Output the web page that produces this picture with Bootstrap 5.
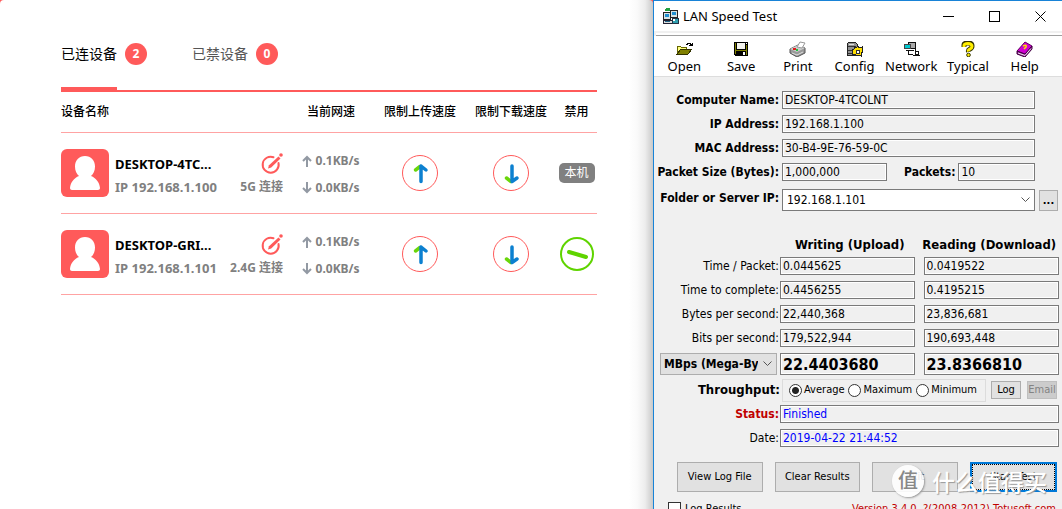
<!DOCTYPE html>
<html lang="zh-CN">
<head>
<meta charset="utf-8">
<meta name="viewport" content="width=device-width, initial-scale=1">
<title>LAN Speed Test</title>
<link href="https://cdn.jsdelivr.net/npm/bootstrap@5.3.0/dist/css/bootstrap.min.css" rel="stylesheet">
<style>
:root{--brand:#ff5a5a;--ui:"Noto Sans","Noto Sans CJK SC",sans-serif;--form:"DejaVu Sans Condensed","Noto Sans CJK SC",sans-serif}
body{font-family:var(--ui);font-size:12px;line-height:16px;color:#000;background:var(--brand)}
.screen{display:grid;grid-template-columns:653fr 409fr;height:100vh;overflow:hidden}
/* router page */
.router{padding:0 56px 0 61px;border-radius:4px;background:linear-gradient(to left,#c9c9c9 0,#ededed 8px,#fafafa 16px,#fff 24px)}
.tabs{height:92px;padding-top:34px;gap:45px;border-bottom:2px solid var(--brand)}
.tab{height:58px;padding:0;border:0;background:none;display:flex;align-items:flex-start;font-size:14px;color:#555}
.tab .caption-text{height:58px;line-height:40px;border-bottom:5px solid transparent}
.tab.active{color:#000}
.tab.active .caption-text{border-color:var(--brand)}
.count{width:22px;height:22px;margin:9px 0 0 8px;border-radius:50%;background:var(--brand);color:#fff;font-weight:700;font-size:12px;line-height:22px}
.devices{table-layout:fixed;width:100%;border-collapse:separate;border-spacing:0}
.devices th,.devices td{padding:0;border-bottom:1px solid #ffa3a3;text-align:center;vertical-align:middle}
.devices th{height:41px;font-weight:500}
.devices td{height:81px}
.devices th:first-child{text-align:left}
.w-speed{width:86px}.w-up{width:92px}.w-down{width:90px}.w-ban{width:41px}
.device{display:flex;align-items:center;padding-right:5px}
.device-info{flex:1;padding:2px 0 0 6px;text-align:left;white-space:nowrap}
.avatar{width:48px;height:48px;flex:none}
.dev-name{font-weight:700;font-size:13px}
.dev-ip{font-size:13px}
.dim{color:#808080;font-weight:700}
.speeds{display:inline-flex;flex-direction:column;gap:11px;padding-top:2px}
.plain-btn{padding:0;border:0;background:none;line-height:0}
.round-btn{display:block;width:36px;height:36px;margin:0 auto;padding:0;border:1px solid var(--brand);border-radius:50%;background:#fff;line-height:0}
.ban-btn{display:block;margin:0 auto}
.self-tag{display:inline-block;width:36px;height:20px;border-radius:5px;background:#808080;color:#fff;line-height:20px}
.arrow{width:10px;height:12px}
/* desktop window */
.win{position:relative;min-width:0;background:#f0f0f0;border-left:1px solid #1883d7;border-top:1px solid #1883d7;font-family:var(--form)}
.titlebar{height:30px;padding:0 16px 0 8px;background:#fff;font-family:var(--ui);font-size:13px}
.topline{height:5px;margin-left:2px;background:#fff;border-top:2px solid #f0f0f0;border-bottom:1px solid #a0a0a0}
.toolbar{height:41px;padding:0 9px 0 2px;background:#fff;border-bottom:1px solid #ddd;font-family:var(--ui);font-size:13px}
.tool{width:57px;padding:3px 0 0;border:0;background:none;color:#000;text-align:center;line-height:18px}
.tool svg{display:block;margin:0 auto}
.frow{display:grid;grid-template-columns:128px 1fr 27px;margin-bottom:6px}
.frow label,.rrow label{text-align:right;padding-right:3px;line-height:18px;white-space:nowrap}
.rrow label{padding-right:1px;font-size:12px}
.fld{display:block;width:100%;min-width:0;height:18px;padding:0 2px;border:1px solid #7a7a7a;border-radius:0;background:#f0f0f0;box-shadow:inset 0 0 0 1px #fff;font:12px/16px var(--form);color:#000}
.fld.tall{height:22px;font-size:16px;font-weight:700}
.fld.blue-text{color:#00f}
.rrow{display:grid;grid-template-columns:126px 1fr 1fr;padding-right:3px;margin-bottom:6px}
.rrow .fld:nth-child(2){width:calc(100% - 5px)}
.rrow .fld:nth-child(3){margin-left:4px;width:calc(100% - 4px)}
.heads{font-size:13px;font-weight:700;text-align:center;white-space:nowrap;margin:26px 0 4px}
.drop{appearance:none;border:1px solid #7a7a7a;border-radius:0;height:22px;width:100%;padding:0 18px 0 4px;font:12px/18px var(--form);color:#000;background:#fff url("data:image/svg+xml,%3Csvg xmlns='http://www.w3.org/2000/svg' width='9' height='6'%3E%3Cpath d='M.5 .5l4 4 4-4' fill='none' stroke='%23555'/%3E%3C/svg%3E") no-repeat right 4px center}
.drop.unit{background-color:#e1e1e1;border-color:#adadad;font-weight:700;padding-left:3px}
.gbtn{padding:0;border:1px solid #adadad;background:#e1e1e1;color:#000;font:11px/14px var(--form)}
.gbtn:disabled{background:#ccc;border-color:#bfbfbf;color:#838383}
.gbtn.big{height:30px;flex:1 1 0}
.gbtn.focus-btn{border:2px solid #0078d7;outline:1px dotted #000;outline-offset:-3px}
.modes{height:23px;border:1px solid #dcdcdc;padding:0 8px 0 6px;font-size:11px}
.modes label{display:flex;align-items:center;gap:2px}
.modes input{appearance:none;width:13px;height:13px;margin:0;border:1px solid #333;border-radius:50%;background:#fff}
.modes input:checked{background:radial-gradient(circle,#222 0 3px,#fff 4px)}
.tick{appearance:none;width:13px;height:13px;margin:0;border:1px solid #333;background:#fff}
.mark-layer{position:absolute;left:238px;top:464px;color:#fff;font-size:23px;line-height:32px;pointer-events:none;text-shadow:1px 1px 1px #999;font-family:"Noto Sans CJK SC",sans-serif;font-weight:500}
.seal{width:32px;height:32px;border-radius:50%;background:rgba(255,255,255,.9);box-shadow:1px 1px 2px #999;color:#888;font-size:20px;line-height:30px;text-align:center;text-shadow:none}
</style>
</head>
<body>
<svg width="0" height="0" class="position-absolute" aria-hidden="true">
<symbol id="person" viewBox="0 0 48 48"><rect width="48" height="48" rx="6" fill="#ff5a5a"/><path d="M24 7c6 0 10 4.500 10 10.500 0 4-1.500 7.500-4 9.500 5 2 8.500 6.500 9 12 0 1.300-.8 2-2 2H11c-1.200 0-2-.7-2-2 .5-5.500 4-10 9-12-2.500-2-4-5.500-4-9.500C14 11.500 18 7 24 7z" fill="#fff"/></symbol>
<symbol id="edit" viewBox="0 0 22 22"><path d="M12.500 4.200A8 8 0 1 0 17.500 10" fill="none" stroke="#ff5a5a" stroke-width="2" stroke-linecap="round"/><path d="M7 15.500l1-3.300 9.500-8.700 2 2-9.300 8.900z" fill="#ff5a5a"/><circle cx="20" cy="2" r="1.800" fill="#ff5a5a"/></symbol>
<symbol id="s-up" viewBox="0 0 10 12"><path d="M5 12V2M1 6l4-4 4 4" fill="none" stroke="#9299a3" stroke-width="2"/></symbol>
<symbol id="s-down" viewBox="0 0 10 12"><path d="M5 0v10M1 6l4 4 4-4" fill="none" stroke="#9299a3" stroke-width="2"/></symbol>
<symbol id="b-up" viewBox="0 0 34 34"><path d="M12.500 14l4.500-3.500" stroke="#6ad60a" stroke-width="3.500" stroke-linecap="round"/><path d="M18 10V25.500M18 10l5 4" stroke="#0c80d0" stroke-width="3.500" stroke-linecap="round"/></symbol>
<symbol id="b-down" viewBox="0 0 34 34"><path d="M12.500 22l4.500 3.500" stroke="#6ad60a" stroke-width="3.500" stroke-linecap="round"/><path d="M18 10v15.500M18 25.500l5-3.500" stroke="#0c80d0" stroke-width="3.500" stroke-linecap="round"/></symbol>
</svg>
<div class="screen">
<main class="router">
  <div class="tabs d-flex">
    <button class="tab active"><span class="caption-text">已连设备</span><span class="count">2</span></button>
    <button class="tab"><span class="caption-text">已禁设备</span><span class="count">0</span></button>
  </div>
  <table class="devices">
    <colgroup><col><col class="w-speed"><col class="w-up"><col class="w-down"><col class="w-ban"></colgroup>
    <thead><tr><th>设备名称</th><th>当前网速</th><th>限制上传速度</th><th>限制下载速度</th><th>禁用</th></tr></thead>
    <tbody>
    <tr>
      <td><div class="device"><svg class="avatar"><use href="#person"/></svg>
        <div class="device-info">
          <div class="d-flex justify-content-between align-items-center mb-1"><span class="dev-name">DESKTOP-4TC...</span><button class="plain-btn" aria-label="编辑"><svg width="22" height="22"><use href="#edit"/></svg></button></div>
          <div class="d-flex justify-content-between dim"><span class="dev-ip">IP 192.168.1.100</span><span>5G 连接</span></div>
        </div></div></td>
      <td><div class="dim speeds"><span><svg class="arrow"><use href="#s-up"/></svg> 0.1KB/s</span><span><svg class="arrow"><use href="#s-down"/></svg> 0.0KB/s</span></div></td>
      <td><button class="round-btn" aria-label="限制上传速度"><svg width="34" height="34"><use href="#b-up"/></svg></button></td>
      <td><button class="round-btn" aria-label="限制下载速度"><svg width="34" height="34"><use href="#b-down"/></svg></button></td>
      <td><span class="self-tag">本机</span></td>
    </tr>
    <tr>
      <td><div class="device"><svg class="avatar"><use href="#person"/></svg>
        <div class="device-info">
          <div class="d-flex justify-content-between align-items-center mb-1"><span class="dev-name">DESKTOP-GRI...</span><button class="plain-btn" aria-label="编辑"><svg width="22" height="22"><use href="#edit"/></svg></button></div>
          <div class="d-flex justify-content-between dim"><span class="dev-ip">IP 192.168.1.101</span><span>2.4G 连接</span></div>
        </div></div></td>
      <td><div class="dim speeds"><span><svg class="arrow"><use href="#s-up"/></svg> 0.1KB/s</span><span><svg class="arrow"><use href="#s-down"/></svg> 0.0KB/s</span></div></td>
      <td><button class="round-btn" aria-label="限制上传速度"><svg width="34" height="34"><use href="#b-up"/></svg></button></td>
      <td><button class="round-btn" aria-label="限制下载速度"><svg width="34" height="34"><use href="#b-down"/></svg></button></td>
      <td><button class="plain-btn ban-btn" aria-label="禁用"><svg width="34" height="34" viewBox="0 0 34 34"><circle cx="17" cy="17" r="16" fill="#fff" stroke="#5fd400" stroke-width="2"/><path d="M9 15l17 5" stroke="#5fd400" stroke-width="4" stroke-linecap="round"/></svg></button></td>
    </tr>
    </tbody>
  </table>
</main>

<section class="win">
  <header class="titlebar d-flex align-items-center">
    <svg width="17" height="17" viewBox="0 0 17 17" shape-rendering="crispEdges"><path d="M1 4h7v7H1zM8 2h7v7H8z" fill="#d8e4e4" stroke="#222"/><path d="M3 6h4v3H3zM10 4h4v3h-4z" fill="#2090d0"/><path d="M2 2l3-2h3v3H3z" fill="#20a040"/><path d="M1 12h9v3H1z" fill="#ddd" stroke="#223"/><path d="M10 10h6v5h-6z" fill="#30a0b0" stroke="#234"/><path d="M11 11h2v2h-2z" fill="#fff"/><path d="M3 13h5v1H3z" fill="#268"/></svg>
    <span class="ms-1">LAN Speed Test</span>
    <div class="ms-auto d-flex" style="gap:35px">
      <button class="plain-btn" aria-label="Minimize"><svg width="11" height="11"><path d="M0 5.500h11" stroke="#000"/></svg></button>
      <button class="plain-btn" aria-label="Maximize"><svg width="11" height="11"><rect x=".5" y=".5" width="10" height="10" fill="none" stroke="#000"/></svg></button>
      <button class="plain-btn" aria-label="Close"><svg width="11" height="11"><path d="M.5 .5l10 10M10.500 .5l-10 10" stroke="#000"/></svg></button>
    </div>
  </header>
  <div class="topline"></div>
  <nav class="toolbar d-flex justify-content-between">
    <button class="tool"><svg width="17" height="16" viewBox="0 0 17 16" shape-rendering="crispEdges"><path d="M1 13V5h3l1 1h5v3H5z" fill="#ffff80" stroke="#666600"/><path d="M1 13l4-5h11l-4 5z" fill="#808000" stroke="#333300"/><path d="M10 3h1V2h3v1h1v2M13 4h3V2" fill="none" stroke="#000"/></svg>Open</button>
    <button class="tool"><svg width="16" height="16" viewBox="0 0 16 16" shape-rendering="crispEdges"><path d="M1 1h14v14H2l-1-1z" fill="#000"/><path d="M2 2h1v11H2zM13 4h1v10h-1zM3 9h10v1H3z" fill="#808000"/><path d="M4 2h8v6H4z" fill="#f4f4ee"/><path d="M13 2h1v1h-1zM10 11h2v3h-2z" fill="#fff"/></svg>Save</button>
    <button class="tool"><svg width="17" height="16" viewBox="0 0 17 16"><path d="M1 8l8-4 7 3v5l-8 4-7-4z" fill="#999" stroke="#555"/><path d="M1 8l8-4 7 3-8 4z" fill="#ccc"/><path d="M8 6l3-5 5 1-3 5z" fill="#fff" stroke="#999"/><path d="M4 8h3" stroke="#e02020" stroke-width="2"/><path d="M7 9h2" stroke="#20c040" stroke-width="2"/><path d="M3 12l5 2 6-3" stroke="#ddd" fill="none"/></svg>Print</button>
    <button class="tool"><svg width="17" height="16" viewBox="0 0 17 16" shape-rendering="crispEdges"><path d="M1 3l2-2h6l2 2v11H1z" fill="#909090" stroke="#222"/><path d="M2 5h8M2 9h6M2 12h6" stroke="#333"/><path d="M3 3h5v1H3z" fill="#ddd"/><path d="M8 5l2 2 2-2 1 2 3-1v3l1 2-2 1v3l-3-1-2 1-1-2-3 1 1-3-1-2 2-1z" fill="#ffe000" stroke="#222"/><path d="M10 9h3v3h-3z" fill="#fff" stroke="#333"/></svg>Config</button>
    <button class="tool"><svg width="17" height="16" viewBox="0 0 17 16" shape-rendering="crispEdges"><path d="M5 1h7v6H5z" fill="#aaa" stroke="#111"/><path d="M1 3h6v4H1z" fill="#00c8d0" stroke="#444"/><path d="M3 9h8M5 9v4h5M12 8v3" fill="none" stroke="#111"/><path d="M12 10h3v3h-3zM10 14h7" fill="#fff" stroke="#111"/></svg>Network</button>
    <button class="tool"><svg width="16" height="16" viewBox="0 0 16 16"><path d="M4 6V4q0-2 4-2t4 3q0 2-2 3T8.500 11" fill="none" stroke="#333300" stroke-width="5"/><path d="M4 6V4.500Q4 2.500 8 2.500t4 3q0 1.500-2 2.500T8.500 10.500" fill="none" stroke="#ffee00" stroke-width="3"/><circle cx="8.500" cy="14" r="1.800" fill="#ffee00" stroke="#333300"/></svg>Typical</button>
    <button class="tool"><svg width="17" height="16" viewBox="0 0 17 16"><path d="M1 10l8-9 7 4-7 9z" fill="#d000d0" stroke="#600060"/><path d="M1 10v3l8 3 7-8V5l-7 8z" fill="#8a108a" stroke="#400040"/><path d="M2 12l7 2.500 6-7" stroke="#eee" fill="none"/><path d="M7 5q4-2 3 1l-2 2" stroke="#ffe000" stroke-width="1.500" fill="none"/></svg>Help</button>
  </nav>

  <form onsubmit="return false">
    <div style="padding-top:14px">
      <div class="frow"><label class="fw-bold" for="cn">Computer Name:</label><input class="fld" id="cn" readonly value="DESKTOP-4TCOLNT"></div>
      <div class="frow"><label class="fw-bold" for="ip">IP Address:</label><input class="fld" id="ip" readonly value="192.168.1.100"></div>
      <div class="frow"><label class="fw-bold" for="mac">MAC Address:</label><input class="fld" id="mac" readonly value="30-B4-9E-76-59-0C"></div>
      <div class="frow"><label class="fw-bold" for="ps">Packet Size (Bytes):</label>
        <div class="d-flex"><input class="fld" style="flex:105 1 0" id="ps" readonly value="1,000,000"><label class="fw-bold" style="flex:73 1 0" for="pk">Packets:</label><input class="fld" style="flex:75 1 0" id="pk" readonly value="10"></div></div>
      <div class="frow mt-2"><label class="fw-bold" for="srv">Folder or Server IP:</label>
        <select class="drop" id="srv"><option>192.168.1.101</option></select>
        <button class="gbtn ms-1 me-1 mt-auto fw-bold" style="height:21px" aria-label="Browse">...</button></div>
    </div>

    <div class="rrow heads"><span></span><span>Writing (Upload)</span><span>Reading (Download)</span></div>
    <div class="rrow"><label for="tp">Time / Packet:</label><input class="fld" id="tp" readonly value="0.0445625"><input class="fld" aria-label="Reading time per packet" readonly value="0.0419522"></div>
    <div class="rrow"><label for="tc">Time to complete:</label><input class="fld" id="tc" readonly value="0.4456255"><input class="fld" aria-label="Reading time to complete" readonly value="0.4195215"></div>
    <div class="rrow"><label for="by">Bytes per second:</label><input class="fld" id="by" readonly value="22,440,368"><input class="fld" aria-label="Reading bytes per second" readonly value="23,836,681"></div>
    <div class="rrow"><label for="bi">Bits per second:</label><input class="fld" id="bi" readonly value="179,522,944"><input class="fld" aria-label="Reading bits per second" readonly value="190,693,448"></div>
    <div class="rrow mb-0"><div style="padding:0 3px 0 6px"><select class="drop unit" aria-label="Unit"><option>MBps (Mega-Bytes)</option></select></div><input class="fld tall" aria-label="Writing throughput" readonly value="22.4403680"><input class="fld tall" aria-label="Reading throughput" readonly value="23.8366810"></div>

    <div class="d-flex align-items-center" style="height:30px;padding-right:5px">
      <span class="fw-bold text-end" style="width:128px;padding-right:2px;font-size:13px">Throughput:</span>
      <div class="modes d-flex flex-grow-1 justify-content-between align-items-center">
        <label><input type="radio" name="m" checked>Average</label><label><input type="radio" name="m">Maximum</label><label><input type="radio" name="m">Minimum</label></div>
      <button class="gbtn" style="width:30px;height:18px;margin:0 6px 0 5px">Log</button><button class="gbtn" style="width:30px;height:18px" disabled>Email</button>
    </div>
    <div class="rrow" style="grid-template-columns:126px 1fr"><label class="fw-bold" style="color:#c00000" for="st">Status:</label><input class="fld blue-text w-100" id="st" readonly value="Finished"></div>
    <div class="rrow" style="grid-template-columns:126px 1fr"><label for="dt">Date:</label><input class="fld blue-text w-100" id="dt" readonly value="2019-04-22 21:44:52"></div>

    <div class="d-flex" style="gap:12px;padding:9px 5px 10px 23px">
      <button class="gbtn big">View Log File</button><button class="gbtn big">Clear Results</button><button class="gbtn big">Exit</button><button class="gbtn big focus-btn">Start Test</button>
    </div>
    <div class="d-flex justify-content-between" style="padding:0 6px 0 14px;font-size:11px;line-height:14px"><label class="d-flex gap-1"><input type="checkbox" class="tick">Log Results</label><span style="color:#c00000">Version 3.4.0. ?(2008-2012) Totusoft.com</span></div>
  </form>
  <div class="mark-layer d-flex text-nowrap" aria-hidden="true"><span class="seal me-2">值</span><span>什么值得买</span></div>
</section>
</div>
<script src="https://cdn.jsdelivr.net/npm/bootstrap@5.3.0/dist/js/bootstrap.bundle.min.js"></script>
</body>
</html>
